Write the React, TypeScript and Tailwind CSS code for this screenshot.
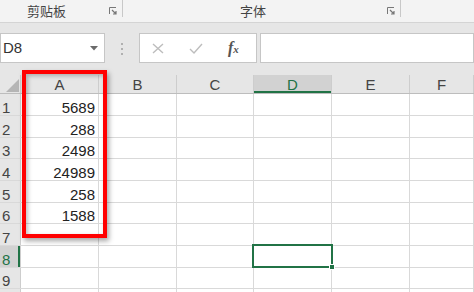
const colW = ['w-[78px]', 'w-[78px]', 'w-[77px]', 'w-[78px]', 'w-[78px]', 'flex-1'];
const colNames = ['A', 'B', 'C', 'D', 'E', 'F'];
const rowH = ['h-[22px]', 'h-[22px]', 'h-[21px]', 'h-[22px]', 'h-[22px]', 'h-[21px]', 'h-[22px]', 'h-[22px]', 'h-[21px]', 'h-[22px]'];
const values = ['5689', '288', '2498', '24989', '258', '1588'];

const Launcher = () => (
  <svg width="8" height="8" viewBox="0 0 8 8" className="text-[#777]">
    <path d="M0.5 7V0.5H7" fill="none" stroke="currentColor" strokeWidth="1" />
    <path d="M3 3L7 7M7 4V7H4" fill="none" stroke="currentColor" strokeWidth="1.2" />
  </svg>
);

const App = () => {
  return (
    <div className="relative w-[474px] h-[292px] overflow-hidden bg-white font-['Liberation_Sans','Noto_Sans_CJK_SC',sans-serif] text-[#333]">
      {/* ribbon group labels */}
      <div className="flex h-[23px] border-b border-[#d4d4d4] bg-[#f3f3f3] text-[13px] text-[#444]">
        <div className="flex w-[122px] items-center pl-[27px] pr-[5px]">
          <span className="flex-1 leading-none">剪贴板</span>
          <Launcher />
        </div>
        <div className="h-[17px] w-px bg-[#c8c8c8]" />
        <div className="flex w-[277px] items-center pl-[117px] pr-[5px]">
          <span className="flex-1 leading-none">字体</span>
          <Launcher />
        </div>
        <div className="h-[17px] w-px bg-[#c8c8c8]" />
      </div>

      {/* formula bar */}
      <div className="flex items-start bg-[#e6e6e6] pt-[10px] pb-[12px]">
        <div className="flex h-[30px] w-[105px] items-center border border-[#c6c6c6] bg-white pl-[2px] pr-[6px]">
          <span className="flex-1 text-[15px] text-[#333]">D8</span>
          <svg width="8" height="5" viewBox="0 0 8 5">
            <path d="M0 0H8L4 4.5Z" fill="#6b6b6b" />
          </svg>
        </div>
        <div className="flex w-[34px] flex-col items-center gap-[3px] pt-[10px]">
          <div className="h-[2px] w-[2px] bg-[#b0b0b0]" />
          <div className="h-[2px] w-[2px] bg-[#b0b0b0]" />
          <div className="h-[2px] w-[2px] bg-[#b0b0b0]" />
        </div>
        <div className="flex h-[30px] w-[118px] items-center border border-[#c6c6c6] bg-white pl-[12px]">
          <svg width="12" height="11" viewBox="0 0 12 11">
            <path d="M1 1L11 10M11 1L1 10" stroke="#bdbdbd" strokeWidth="1.4" fill="none" />
          </svg>
          <svg width="14" height="11" viewBox="0 0 14 11" className="ml-[25px]">
            <path d="M1 6L5 10L13 1" stroke="#bdbdbd" strokeWidth="1.4" fill="none" />
          </svg>
          <span className="ml-[25px] font-['Liberation_Serif',serif] text-[16px] font-bold italic text-[#555]">
            f<span className="text-[11px]">x</span>
          </span>
        </div>
        <div className="ml-[3px] h-[30px] flex-1 border border-[#c6c6c6] bg-white" />
      </div>

      {/* sheet */}
      <div className="flex h-[19px] border-b border-[#bdbdbd] bg-[#e6e6e6] text-[15px] text-[#444]">
        <div className="flex w-[21px] items-end justify-end border-r border-[#cdcdcd] pb-[1px] pr-[1px]">
          <svg width="13" height="13" viewBox="0 0 13 13">
            <path d="M13 0V13H0Z" fill="#b5b5b5" />
          </svg>
        </div>
        {colNames.map((c, i) => (
          <div
            key={c}
            className={`${colW[i]} flex items-end justify-center border-r border-[#cdcdcd] leading-[16px] ${
              c === 'D' ? 'bg-[#d2d2d2] text-[#217346] shadow-[inset_0_-2px_0_#217346]' : ''
            }`}
          >
            {c}
          </div>
        ))}
      </div>
      {rowH.map((h, r) => (
        <div key={r} className={`flex ${h} border-b border-[#d9d9d9] text-[15px] leading-[14px]`}>
          <div
            className={`flex w-[21px] items-end pl-[2px] ${
              r === 7
                ? 'bg-[#d2d2d2] text-[#217346] shadow-[inset_-2px_0_0_#217346]'
                : 'bg-[#e6e6e6] text-[#444]'
            } border-r border-[#cdcdcd]`}
          >
            {r < 9 ? r + 1 : ''}
          </div>
          {colNames.map((c, i) => (
            <div
              key={c}
              className={`${colW[i]} flex items-end justify-end border-r border-[#d9d9d9] pr-[3px] text-[#222]`}
            >
              {i === 0 ? values[r] ?? '' : ''}
            </div>
          ))}
        </div>
      ))}

      {/* red highlight frame */}
      <div className="absolute left-[22px] top-[70px] h-[168px] w-[85px] border-[4px] border-[#ff0000] shadow-[2px_3px_5px_rgba(0,0,0,0.35),inset_2px_2px_4px_rgba(0,0,0,0.25)]" />

      {/* active cell D8 */}
      <div className="absolute left-[252px] top-[244px] h-[24px] w-[81px] border-2 border-[#217346]">
        <div className="absolute -bottom-[4px] -right-[4px] h-[6px] w-[6px] border border-white bg-[#217346]" />
      </div>
    </div>
  );
};

export default App;
